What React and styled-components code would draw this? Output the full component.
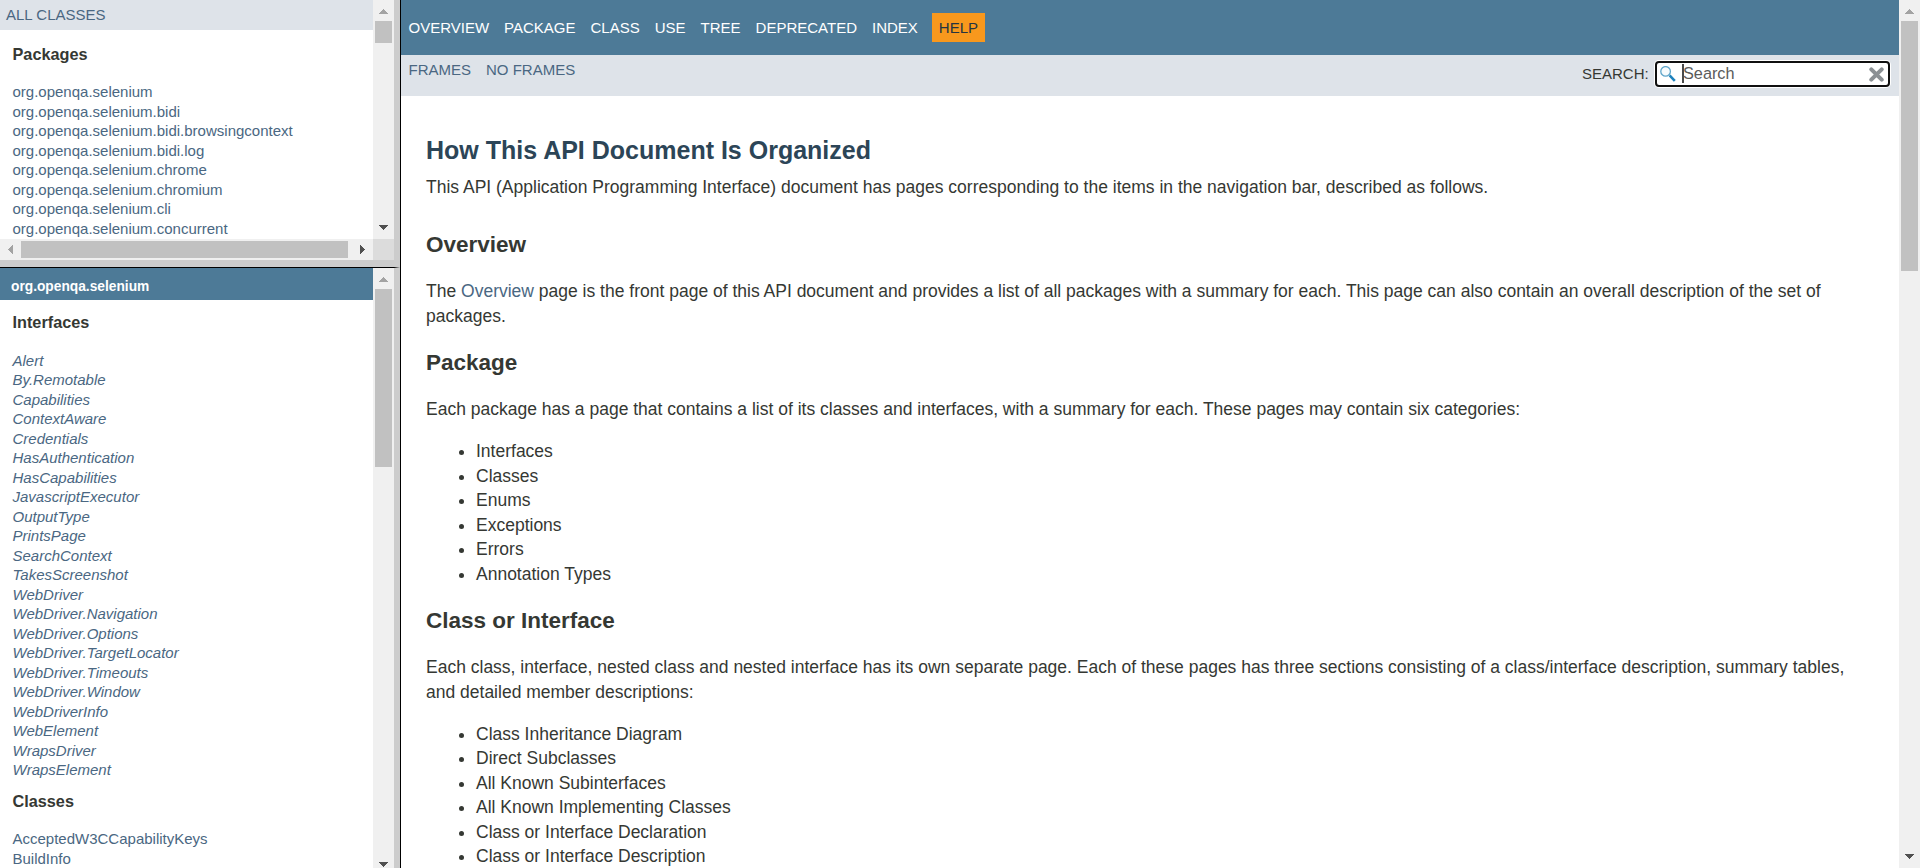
import React from "react";
import styled, { createGlobalStyle, css } from "styled-components";

const GlobalStyle = createGlobalStyle`
  html, body { margin: 0; padding: 0; }
  body {
    background: #fff;
    color: #353833;
    font-family: "Liberation Sans", Arial, Helvetica, sans-serif;
    font-size: 17.5px;
    overflow: hidden;
  }
`;

const Frameset = styled.div`
  display: flex;
  width: 1920px;
  height: 868px;
  overflow: hidden;
`;

const Side = styled.div`
  display: flex;
  flex-direction: column;
  flex: none;
  width: 400px;
  height: 868px;
  overflow: hidden;
  background: #ccc;
`;

const VerticalLine = styled.div`
  flex: none;
  width: 1px;
  background: #000;
`;

const Splitter = styled.div`
  flex: none;
  height: 7px;
  background: #ccc;
`;

const SplitterLine = styled.div`
  flex: none;
  height: 1px;
  background: linear-gradient(to right, #000 394px, #ccc 400px);
`;

const Frame = styled.div`
  display: flex;
  flex: none;
  width: 394px;
  height: ${(p) => p.$height}px;
`;

const FrameColumn = styled.div`
  display: flex;
  flex-direction: column;
  flex: none;
  width: 373px;
`;

const FrameBody = styled.div`
  flex: 1;
  min-height: 0;
  overflow: hidden;
  background: #fff;
`;

const AllClasses = styled.div`
  height: 30px;
  box-sizing: border-box;
  padding: 5px 6px 0;
  background: #dee3e9;
  color: #4a6782;
  font-size: 15px;
  line-height: 19.5px;
`;

const PackageBar = styled.div`
  height: 32px;
  box-sizing: border-box;
  padding: 10px 11px 0;
  background: #4d7a97;
  color: #fff;
  font-size: 13.75px;
  font-weight: bold;
  line-height: 17px;
`;

const SideTitle = styled.h2`
  margin: ${(p) => p.$top}px 0 ${(p) => p.$bottom || 18}px;
  padding: 0 12.5px;
  font-size: 16.25px;
  line-height: 20px;
`;

const SideList = styled.ul`
  list-style: none;
  margin: 0;
  padding: 0 12.5px;
  color: #4a6782;
  font-size: 15px;
  line-height: 19.5px;
  font-style: ${(p) => (p.$italic ? "italic" : "normal")};
  white-space: nowrap;
`;

const bar = css`
  display: flex;
  flex: none;
  align-items: center;
  background: #f0f0f0;
`;

const VBar = styled.div`
  ${bar}
  flex-direction: column;
  width: 21px;
`;

const HBar = styled.div`
  ${bar}
  height: 21px;
`;

const Thumb = styled.div`
  flex: none;
  background: #c1c1c1;
  width: ${(p) => p.$w}px;
  height: ${(p) => p.$h}px;
`;

const Spacer = styled.div`
  flex: 1;
`;

const Corner = styled.div`
  height: 21px;
  width: 21px;
  flex: none;
  background: #dcdcdc;
`;

const ArrowSvg = styled.svg`
  display: block;
  flex: none;
`;

const ARROWS = {
  up: ["M5.7 14 L10.5 8.8 L15.3 14 Z", "#a3a3a3"],
  left: ["M13 5.7 L7.8 10.5 L13 15.3 Z", "#a3a3a3"],
  down: ["M5.7 7 H15.3 L10.5 12.2 Z", "#505050"],
  right: ["M8 5.7 L13.2 10.5 L8 15.3 Z", "#505050"],
};

function Arrow({ dir }) {
  const [d, fill] = ARROWS[dir];
  return (
    <ArrowSvg width="21" height="21" viewBox="0 0 21 21" shapeRendering="crispEdges">
      <path d={d} fill={fill} />
    </ArrowSvg>
  );
}

function VScroll({ thumb }) {
  return (
    <VBar>
      <Arrow dir="up" />
      <Thumb $w={17} $h={thumb} />
      <Spacer />
      <Arrow dir="down" />
    </VBar>
  );
}

const Main = styled.div`
  display: flex;
  flex: 1;
  min-width: 0;
  background: #fff;
`;

const Page = styled.div`
  flex: 1;
  min-width: 0;
  height: 868px;
  overflow: hidden;
`;

const TopNav = styled.nav`
  display: flex;
  align-items: center;
  height: 55px;
  background: #4d7a97;
  color: #fff;
  font-size: 15px;
`;

const NavItem = styled.span`
  padding: 6px 7.5px;
  line-height: 17px;
  ${(p) =>
    p.$active &&
    css`
      background: #f8981d;
      color: #253441;
      margin-left: 6.3px;
      padding: 6px 7.2px;
    `}
`;

const SubNav = styled.div`
  display: flex;
  justify-content: space-between;
  align-items: flex-start;
  height: 41px;
  background: #dee3e9;
  font-size: 15px;
`;

const SubLinks = styled.div`
  display: flex;
  gap: 15px;
  padding: 6px 7.5px 0;
  color: #4a6782;
  line-height: 18px;
`;

const SearchArea = styled.div`
  display: flex;
  gap: 6.3px;
  padding: 6px 9px 0 0;
`;

const SearchLabel = styled.label`
  padding-top: 4px;
  line-height: 18px;
`;

const SearchBox = styled.div`
  display: flex;
  align-items: center;
  box-sizing: border-box;
  width: 235px;
  height: 26px;
  padding: 0 4px 0 3px;
  border: 2px solid #101010;
  border-radius: 4px;
  background: #fff;
  box-shadow: 0 0 0 1px #fff;
`;

const Caret = styled.span`
  width: 2px;
  height: 19px;
  margin: 0 -1px 2px 6px;
  background: #4a4a4a;
`;

const Placeholder = styled.span`
  flex: 1;
  margin-top: -2px;
  color: #5b5b5b;
  font-size: 16.25px;
  line-height: 20px;
`;

const Content = styled.main`
  padding: 39px 25px 0;
  line-height: 24.5px;
`;

const Title = styled.h1`
  margin: 0;
  color: #2c4557;
  font-size: 25px;
  line-height: 30px;
`;

const Lead = styled.div`
  margin-top: 9.5px;
`;

const Section = styled.section`
  margin-top: ${(p) => p.$top}px;
`;

const SectionTitle = styled.h2`
  margin: 0 0 20px;
  font-size: 22.5px;
  line-height: 28px;
`;

const Paragraph = styled.p`
  margin: 0;
`;

const Link = styled.a`
  color: #4a6782;
`;

const Bullets = styled.ul`
  margin: 17.5px 0 0;
  padding: 0 0 0 50px;
`;

const packages = [
  "org.openqa.selenium",
  "org.openqa.selenium.bidi",
  "org.openqa.selenium.bidi.browsingcontext",
  "org.openqa.selenium.bidi.log",
  "org.openqa.selenium.chrome",
  "org.openqa.selenium.chromium",
  "org.openqa.selenium.cli",
  "org.openqa.selenium.concurrent",
];

const interfaces = [
  "Alert", "By.Remotable", "Capabilities", "ContextAware", "Credentials",
  "HasAuthentication", "HasCapabilities", "JavascriptExecutor", "OutputType",
  "PrintsPage", "SearchContext", "TakesScreenshot", "WebDriver",
  "WebDriver.Navigation", "WebDriver.Options", "WebDriver.TargetLocator",
  "WebDriver.Timeouts", "WebDriver.Window", "WebDriverInfo", "WebElement",
  "WrapsDriver", "WrapsElement",
];

const classes = ["AcceptedW3CCapabilityKeys", "BuildInfo"];

const navItems = ["Overview", "Package", "Class", "Use", "Tree", "Deprecated", "Index", "Help"];

const packageCategories = ["Interfaces", "Classes", "Enums", "Exceptions", "Errors", "Annotation Types"];

const classSections = [
  "Class Inheritance Diagram",
  "Direct Subclasses",
  "All Known Subinterfaces",
  "All Known Implementing Classes",
  "Class or Interface Declaration",
  "Class or Interface Description",
];

const items = (list) => list.map((name) => <li key={name}>{name}</li>);

function SearchIcon() {
  return (
    <svg width="16" height="16" viewBox="0 0 16 16">
      <circle cx="5.6" cy="5.4" r="4.8" fill="#f7fbfd" stroke="#5fa5c9" strokeWidth="1.3" />
      <path d="M9.6 9.4 L14.8 14.8" stroke="#1d82bd" strokeWidth="2.6" />
    </svg>
  );
}

function ClearIcon() {
  return (
    <svg width="15" height="15" viewBox="0 0 15 15">
      <path d="M2.3 2.3 L12.7 12.7 M12.7 2.3 L2.3 12.7" stroke="#8b9094" strokeWidth="4" strokeLinecap="round" />
    </svg>
  );
}

export default function App() {
  return (
    <Frameset>
      <GlobalStyle />
      <Side>
        <Frame $height={260}>
          <FrameColumn>
            <FrameBody>
              <AllClasses>ALL CLASSES</AllClasses>
              <SideTitle $top={14}>Packages</SideTitle>
              <SideList>{items(packages)}</SideList>
            </FrameBody>
            <HBar>
              <Arrow dir="left" />
              <Thumb $w={327} $h={17} />
              <Spacer />
              <Arrow dir="right" />
            </HBar>
          </FrameColumn>
          <div>
            <Frame as={VBar} $height={239}>
              <Arrow dir="up" />
              <Thumb $w={17} $h={22} />
              <Spacer />
              <Arrow dir="down" />
            </Frame>
            <Corner />
          </div>
        </Frame>
        <Splitter />
        <SplitterLine />
        <Frame $height={608}>
          <FrameColumn>
            <FrameBody>
              <PackageBar>org.openqa.selenium</PackageBar>
              <SideTitle $top={12} $bottom={18.5}>Interfaces</SideTitle>
              <SideList $italic>{items(interfaces)}</SideList>
              <SideTitle $top={11.5}>Classes</SideTitle>
              <SideList>{items(classes)}</SideList>
            </FrameBody>
          </FrameColumn>
          <VScroll thumb={178} />
        </Frame>
      </Side>
      <VerticalLine />
      <Main>
        <Page>
          <TopNav>
            {navItems.map((name) => (
              <NavItem key={name} $active={name === "Help"}>
                {name.toUpperCase()}
              </NavItem>
            ))}
          </TopNav>
          <SubNav>
            <SubLinks>
              <span>FRAMES</span>
              <span>NO FRAMES</span>
            </SubLinks>
            <SearchArea>
              <SearchLabel>SEARCH:</SearchLabel>
              <SearchBox>
                <SearchIcon />
                <Caret />
                <Placeholder>Search</Placeholder>
                <ClearIcon />
              </SearchBox>
            </SearchArea>
          </SubNav>
          <Content>
            <Title>How This API Document Is Organized</Title>
            <Lead>
              This API (Application Programming Interface) document has pages corresponding to the
              items in the navigation bar, described as follows.
            </Lead>
            <Section $top={32}>
              <SectionTitle>Overview</SectionTitle>
              <Paragraph>
                The <Link>Overview</Link> page is the front page of this API document and provides a
                list of all packages with a summary for each. This page can also contain an overall
                description of the set of packages.
              </Paragraph>
            </Section>
            <Section $top={21}>
              <SectionTitle>Package</SectionTitle>
              <Paragraph>
                Each package has a page that contains a list of its classes and interfaces, with a
                summary for each. These pages may contain six categories:
              </Paragraph>
              <Bullets>{items(packageCategories)}</Bullets>
            </Section>
            <Section $top={21}>
              <SectionTitle>Class or Interface</SectionTitle>
              <Paragraph>
                Each class, interface, nested class and nested interface has its own separate page.
                Each of these pages has three sections consisting of a class/interface description,
                summary tables, and detailed member descriptions:
              </Paragraph>
              <Bullets>{items(classSections)}</Bullets>
            </Section>
          </Content>
        </Page>
        <VScroll thumb={250} />
      </Main>
    </Frameset>
  );
}
